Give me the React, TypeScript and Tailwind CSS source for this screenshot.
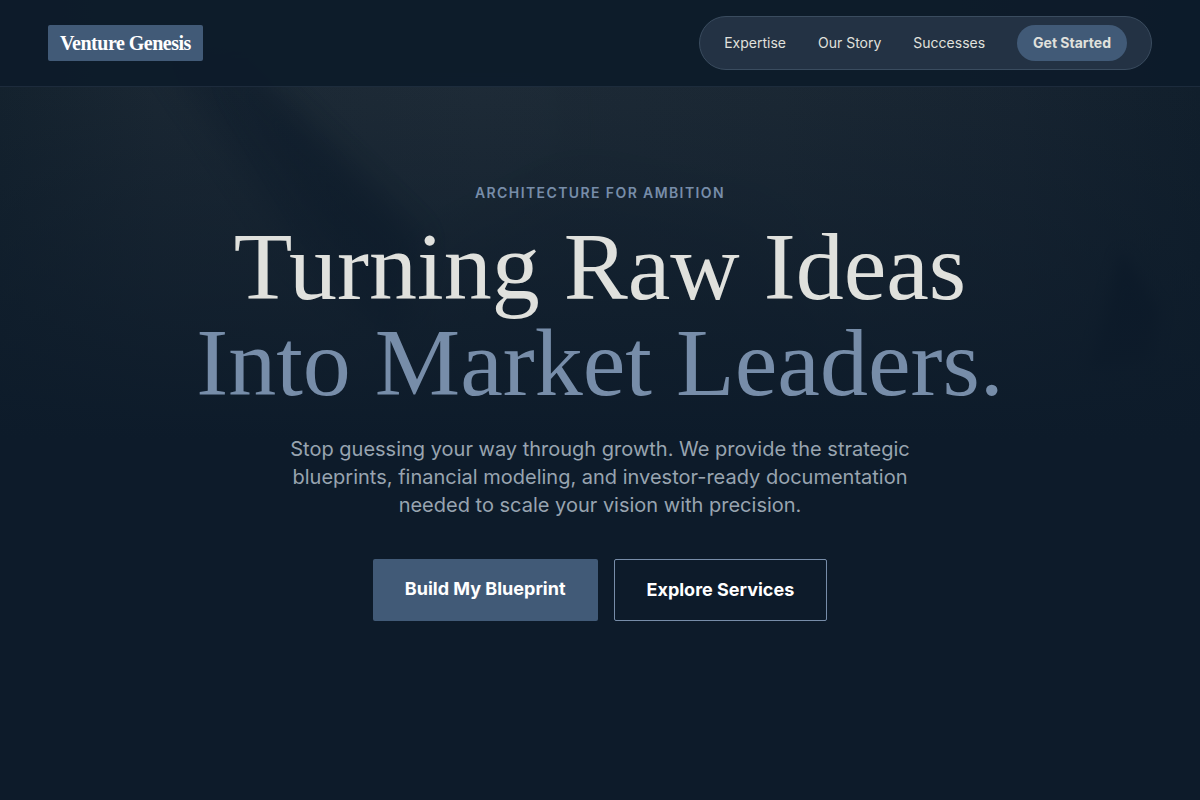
const navLinks = [
  { label: 'Expertise', href: '#expertise' },
  { label: 'Our Story', href: '#story' },
  { label: 'Successes', href: '#successes' },
];

function Backdrop() {
  return (
    <svg
      aria-hidden="true"
      className="absolute inset-0 h-full w-full"
      viewBox="0 0 1200 800"
      preserveAspectRatio="xMidYMin slice"
    >
      <defs>
        <linearGradient id="glow" x1="0" x2="1" y1="0" y2="0">
          <stop offset="0" stopColor="#14222e" />
          <stop offset="0.13" stopColor="#1a2733" />
          <stop offset="0.4" stopColor="#1d2a36" />
          <stop offset="0.65" stopColor="#1b2834" />
          <stop offset="0.85" stopColor="#172431" />
          <stop offset="1" stopColor="#111f2c" />
        </linearGradient>
        <linearGradient id="fade" x1="0" x2="0" y1="0" y2="1">
          <stop offset="0.1" stopColor="#0d1b2a" stopOpacity="0" />
          <stop offset="0.55" stopColor="#0d1b2a" stopOpacity="1" />
        </linearGradient>
        <filter id="crisp" x="-30%" y="-30%" width="160%" height="160%" colorInterpolationFilters="sRGB">
          <feGaussianBlur stdDeviation="7" />
        </filter>
        <filter id="soft" x="-30%" y="-30%" width="160%" height="160%" colorInterpolationFilters="sRGB">
          <feGaussianBlur stdDeviation="14" />
        </filter>
        <filter id="softer" x="-30%" y="-30%" width="160%" height="160%" colorInterpolationFilters="sRGB">
          <feGaussianBlur stdDeviation="24" />
        </filter>
      </defs>
      <rect width="1200" height="800" fill="url(#glow)" />
      <path d="M250 60 L560 60 L570 150 L440 250 Z" fill="#22303b" opacity="0.2" filter="url(#soft)" />
      <path d="M160 50 L235 50 L420 240 L400 350 L310 270 Z" fill="#0d1b2a" opacity="0.4" filter="url(#soft)" />
      <path d="M230 70 L260 90 L420 238 L400 310 L320 220 Z" fill="#0d1b2a" opacity="0.4" filter="url(#soft)" />
      <path d="M440 260 L580 190 L760 230 L860 420 L400 420 Z" fill="#0d1b2a" opacity="0.2" filter="url(#softer)" />
      <path d="M1121 250 L1160 310 L1150 360 L1090 370 Z" fill="#0b1827" opacity="0.8" filter="url(#crisp)" />
      <rect width="1200" height="800" fill="url(#fade)" />
    </svg>
  );
}

export default function App() {
  return (
    <div className="relative isolate flex min-h-screen flex-col overflow-hidden bg-[#0d1b2a] font-['Inter',sans-serif] text-[#e0e1dd]">
      <Backdrop />
      <header className="relative border-b border-[#778da9]/15 bg-[#0d1b2a]/95">
        <div className="flex items-center justify-between px-12 py-4">
          <a
            href="#home"
            className="rounded-xs bg-[#415a77] px-3 py-1 font-['Liberation_Serif',serif] text-xl font-bold tracking-tight text-white"
          >
            Venture Genesis
          </a>
          <nav
            aria-label="Main"
            className="flex items-center gap-8 rounded-full border border-[#3a4c5f] bg-[#233244] px-6 py-2 text-sm"
          >
            {navLinks.map((link) => (
              <a key={link.href} href={link.href}>
                {link.label}
              </a>
            ))}
            <a href="#start" className="rounded-full bg-[#415a77] px-4 py-2 font-bold">
              Get Started
            </a>
          </nav>
        </div>
      </header>

      <main className="relative flex flex-col items-center px-6 py-24 text-center">
        <p className="mb-4 text-sm font-semibold tracking-widest text-[#778da9] uppercase">
          Architecture for Ambition
        </p>
        <h1 className="mb-6 font-['Liberation_Serif',serif] text-8xl leading-none">
          Turning Raw Ideas
          <br />
          <span className="text-[#778da9]">Into Market Leaders.</span>
        </h1>
        <p className="mb-10 max-w-2xl text-xl text-[#98a4b0]">
          Stop guessing your way through growth. We provide the strategic blueprints, financial
          modeling, and investor-ready documentation needed to scale your vision with precision.
        </p>
        <div className="flex gap-4 text-lg font-bold text-white">
          <a href="#blueprint" className="rounded-xs bg-[#415a77] px-8 py-4">
            Build My Blueprint
          </a>
          <a href="#services" className="rounded-xs border border-[#778da9] px-8 py-4">
            Explore Services
          </a>
        </div>
      </main>
    </div>
  );
}
